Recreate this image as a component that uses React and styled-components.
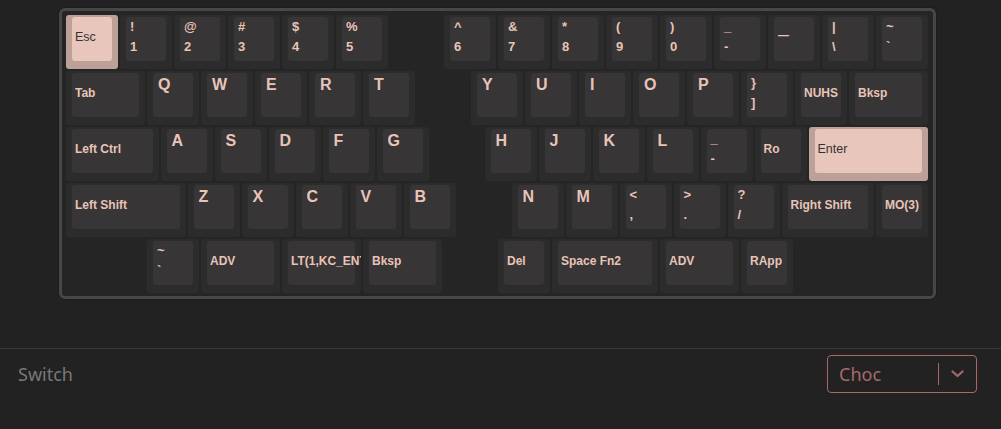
import React from "react";
import styled, { createGlobalStyle } from "styled-components";

const U = 54;

const GlobalStyle = createGlobalStyle`
  html, body { margin: 0; padding: 0; background: #222222; }
  body { font-family: "Liberation Sans", Arial, sans-serif; }
`;

const Page = styled.div`
  display: flex;
  flex-direction: column;
  width: 1001px;
  height: 429px;
  background: #222222;
  overflow: hidden;
`;

const KeyboardArea = styled.div`
  display: flex;
  padding: 8px 0 0 59px;
`;

const Frame = styled.div`
  display: flex;
  flex-direction: column;
  border: 3px solid #474747;
  border-radius: 6px;
  background: #252525;
  padding: 4px 3px 1px 4px;
  box-shadow: 0 0 0 1px #1d1d1d;
`;

const Row = styled.div`
  display: flex;
  height: 56px;
`;

const Slot = styled.div`
  box-sizing: border-box;
  flex: none;
  width: ${(p) => p.$w * U}px;
  height: 56px;
  padding: 0 2px 2px 0;
`;

const KeyOuter = styled.div`
  box-sizing: border-box;
  width: 100%;
  height: 100%;
  padding: 2px 6px 8px 6px;
  border-radius: 3px;
  overflow: hidden;
  background: ${(p) => (p.$hl ? "#bda198" : "#2c2c2c")};
`;

const KeyCap = styled.div`
  box-sizing: border-box;
  width: 100%;
  height: 100%;
  border-radius: 3px;
  background: ${(p) => (p.$hl ? "#e8c6bb" : "#373535")};
  color: ${(p) => (p.$hl ? "#333333" : "#e8c4b8")};
  white-space: nowrap;
  display: flex;
  flex-direction: column;
`;

const CharLegend = styled.div`
  font-size: 16px;
  font-weight: 700;
  line-height: 18px;
  padding: 3px 0 0 5px;
`;

const PairLegend = styled.div`
  font-size: 13px;
  font-weight: 700;
  line-height: 20px;
  padding: 0 0 0 4px;
`;

const TextLegend = styled.div`
  flex: 1;
  display: flex;
  align-items: center;
  font-size: ${(p) => (p.$hl ? "12.5px" : "12px")};
  font-weight: ${(p) => (p.$hl ? 400 : 700)};
  line-height: 14px;
  padding: 0 0 5px 3px;
`;

const DashLegend = styled.div`
  flex: 1;
  display: flex;
  align-items: center;
  font-size: 11px;
  font-weight: 700;
  padding: 0 0 8px 4px;
`;

const Divider = styled.div`
  margin-top: 49px;
  height: 1px;
  background: #3a3a3a;
`;

const SettingRow = styled.div`
  display: flex;
  align-items: center;
  justify-content: space-between;
  padding: 6px 24px 0 18px;
`;

const SettingLabel = styled.div`
  font-family: "Noto Sans", "Open Sans", sans-serif;
  font-size: 18px;
  color: #787878;
  padding-bottom: 1px;
`;

const Select = styled.div`
  box-sizing: border-box;
  width: 150px;
  height: 38px;
  border: 1px solid #a86868;
  border-radius: 4px;
  display: flex;
  align-items: center;
`;

const SelectValue = styled.div`
  flex: 1;
  padding-left: 11px;
  font-family: "Noto Sans", "Open Sans", sans-serif;
  font-size: 18px;
  color: #a86a6a;
  padding-bottom: 1px;
`;

const Separator = styled.span`
  width: 1px;
  height: 22px;
  background: #a86868;
`;

const Indicator = styled.div`
  width: 37px;
  height: 100%;
  display: flex;
  align-items: center;
  justify-content: center;
`;

const k = (label, w = 1, opts = {}) => ({ label, w, ...opts });
const sp = (w) => ({ spacer: true, w });

const rows = [
  [
    k("Esc", 1, { hl: true }),
    k(["!", "1"]), k(["@", "2"]), k(["#", "3"]), k(["$", "4"]), k(["%", "5"]),
    sp(1),
    k(["^", "6"]), k(["&", "7"]), k(["*", "8"]), k(["(", "9"]), k([")", "0"]),
    k(["_", "-"]), k("—", 1, { dash: true }), k(["|", "\\"]), k(["~", "`"]),
  ],
  [
    k("Tab", 1.5),
    k("Q"), k("W"), k("E"), k("R"), k("T"),
    sp(1),
    k("Y"), k("U"), k("I"), k("O"), k("P"), k(["}", "]"]), k("NUHS"), k("Bksp", 1.5),
  ],
  [
    k("Left Ctrl", 1.75),
    k("A"), k("S"), k("D"), k("F"), k("G"),
    sp(1),
    k("H"), k("J"), k("K"), k("L"), k(["_", "-"]), k("Ro"), k("Enter", 2.25, { hl: true }),
  ],
  [
    k("Left Shift", 2.25),
    k("Z"), k("X"), k("C"), k("V"), k("B"),
    sp(1),
    k("N"), k("M"), k(["<", ","]), k([">", "."]), k(["?", "/"]), k("Right Shift", 1.75), k("MO(3)"),
  ],
  [
    sp(1.5),
    k(["~", "`"]), k("ADV", 1.5), k("LT(1,KC_ENT)", 1.5), k("Bksp", 1.5),
    sp(1),
    k("Del"), k("Space Fn2", 2), k("ADV", 1.5), k("RApp"),
  ],
];

function Legend({ item }) {
  const { label, hl, dash } = item;
  if (Array.isArray(label)) {
    return (
      <>
        <PairLegend>{label[0]}</PairLegend>
        <PairLegend>{label[1]}</PairLegend>
      </>
    );
  }
  if (dash) return <DashLegend>{label}</DashLegend>;
  if (label.length === 1) return <CharLegend>{label}</CharLegend>;
  return <TextLegend $hl={hl}>{label}</TextLegend>;
}

function Key({ item }) {
  return (
    <Slot $w={item.w}>
      <KeyOuter $hl={item.hl}>
        <KeyCap $hl={item.hl}>
          <Legend item={item} />
        </KeyCap>
      </KeyOuter>
    </Slot>
  );
}

export default function App() {
  return (
    <Page>
      <GlobalStyle />
      <KeyboardArea>
        <Frame>
          {rows.map((row, ri) => (
            <Row key={ri}>
              {row.map((item, i) =>
                item.spacer ? <Slot key={i} $w={item.w} /> : <Key key={i} item={item} />
              )}
            </Row>
          ))}
        </Frame>
      </KeyboardArea>
      <Divider />
      <SettingRow>
        <SettingLabel>Switch</SettingLabel>
        <Select>
          <SelectValue>Choc</SelectValue>
          <Separator />
          <Indicator>
            <svg width="13" height="8" viewBox="0 0 13 8" fill="none">
              <path d="M1.5 1.5 L6.5 6 L11.5 1.5" stroke="#a86868" strokeWidth="2.2" strokeLinecap="round" strokeLinejoin="round" />
            </svg>
          </Indicator>
        </Select>
      </SettingRow>
    </Page>
  );
}
